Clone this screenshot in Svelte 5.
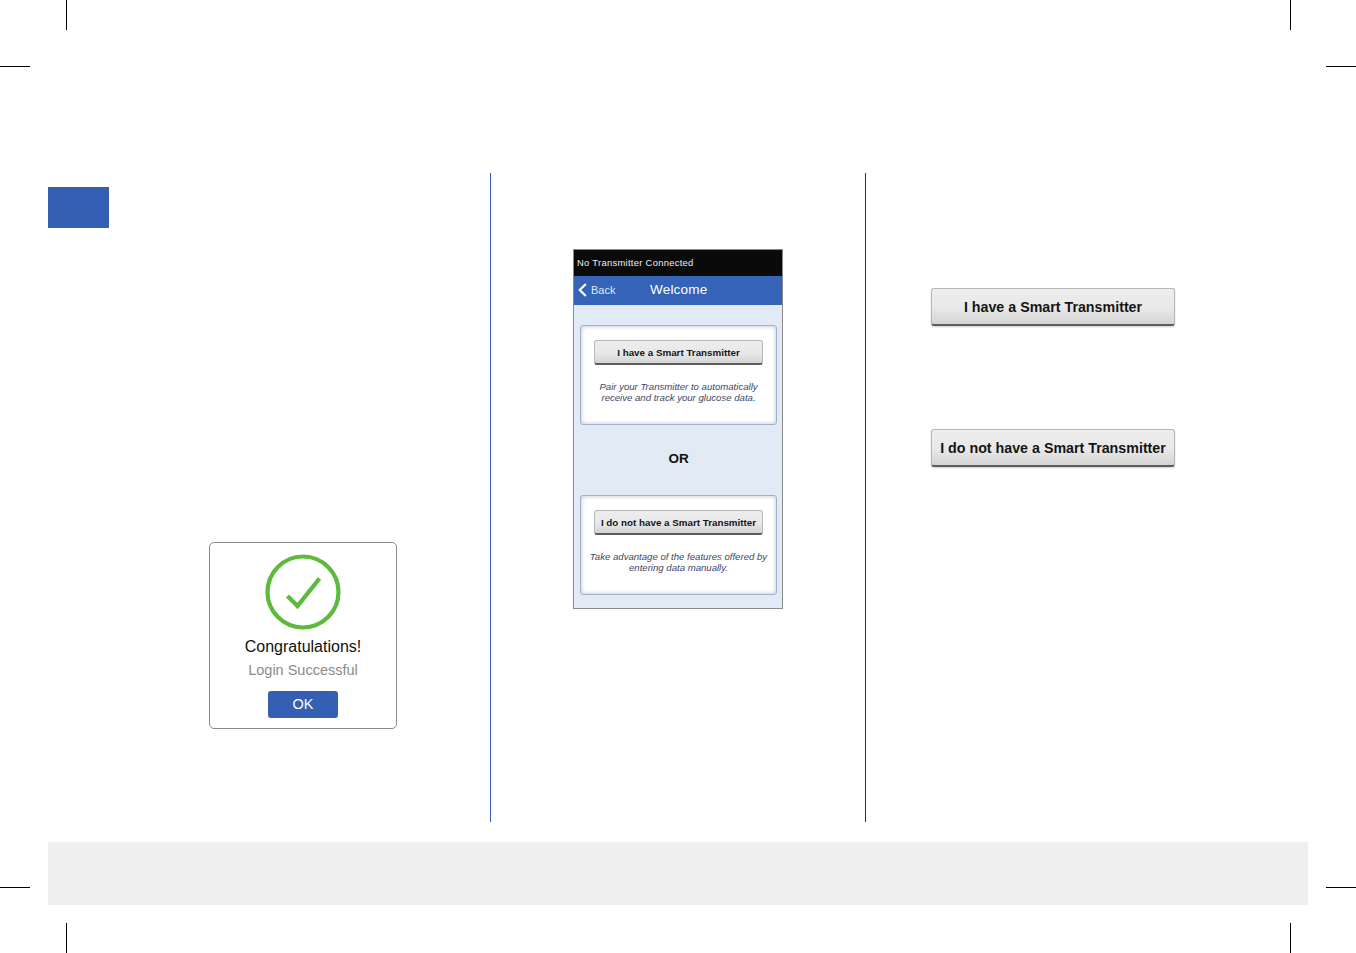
<script>
  // crop marks sit on the page corners, outside the content flow
  const marks = [
    ["v", 66, 0], ["v", 1290, 0], ["v", 66, 923], ["v", 1290, 923],
    ["h", 0, 66], ["h", 1326, 66], ["h", 0, 887], ["h", 1326, 887]
  ];
</script>

<div class="page">
  {#each marks as [dir, x, y]}
    <i class="mark {dir}" style="left:{x}px;top:{y}px"></i>
  {/each}

  <div class="columns">
    <section class="col first">
      <div class="tab"></div>
      <div class="dialog">
        <svg class="check" width="76" height="76" viewBox="0 0 76 76" fill="none" stroke="#5cbb3c">
          <circle cx="38" cy="38" r="35.5" stroke-width="4.2"/>
          <path d="M22.5 42 L32.5 52 L54.5 24.5" stroke-width="4.4"/>
        </svg>
        <div class="congrats">Congratulations!</div>
        <div class="login">Login Successful</div>
        <div class="ok">OK</div>
      </div>
    </section>

    <section class="col second">
      <div class="phone">
        <div class="status">No Transmitter Connected</div>
        <div class="nav">
          <span class="back">
            <svg width="9" height="14" viewBox="0 0 9 14" fill="none" stroke="#fff" stroke-width="2.2">
              <path d="M7.8 1 L1.8 7 L7.8 13"/>
            </svg>
            Back
          </span>
          <span class="title">Welcome</span>
        </div>
        <div class="body">
          <div class="card">
            <div class="btn small">I have a Smart Transmitter</div>
            <p>Pair your Transmitter to automatically<br />receive and track your glucose data.</p>
          </div>
          <div class="or">OR</div>
          <div class="card">
            <div class="btn small">I do not have a Smart Transmitter</div>
            <p>Take advantage of the features offered by<br />entering data manually.</p>
          </div>
        </div>
      </div>
    </section>

    <section class="col third">
      <div class="btn large">I have a Smart Transmitter</div>
      <div class="btn large">I do not have a Smart Transmitter</div>
    </section>
  </div>

  <div class="footer"></div>
</div>

<style>
  :global(body) {
    margin: 0;
    background: #fff;
    font-family: "Liberation Sans", Arial, sans-serif;
  }

  .page {
    position: relative;
    width: 1356px;
    height: 953px;
    box-sizing: border-box;
    padding: 173px 48px 0;
    overflow: hidden;
  }

  .mark {
    position: absolute;
    background: #000;
  }

  .mark.v {
    width: 1px;
    height: 30px;
  }

  .mark.h {
    width: 30px;
    height: 1px;
  }

  .columns {
    display: grid;
    grid-template-columns: 443px 375px 1fr;
    height: 649px;
  }

  .col {
    box-sizing: border-box;
  }

  .first {
    border-right: 1px solid #345fb2;
    padding-top: 14px;
  }

  .second {
    border-right: 1px solid #333;
    padding: 76px 0 0 82px;
  }

  .third {
    display: flex;
    flex-direction: column;
    gap: 103px;
    padding: 115px 0 0 65px;
  }

  .tab {
    width: 61px;
    height: 41px;
    background: #345fb2;
  }

  .dialog {
    box-sizing: border-box;
    width: 188px;
    height: 187px;
    margin: 314px 0 0 161px;
    padding-top: 11px;
    border: 1px solid #8a8a8a;
    border-radius: 5px;
    display: flex;
    flex-direction: column;
    align-items: center;
  }

  .check {
    display: block;
    flex-shrink: 0;
  }

  .congrats {
    margin-top: 7px;
    font-size: 16px;
    line-height: 20px;
    color: #111;
  }

  .login {
    margin-top: 3px;
    font-size: 14.5px;
    line-height: 20px;
    color: #8b8b8b;
  }

  .ok {
    width: 70px;
    height: 27px;
    margin-top: 11px;
    background: #345fb2;
    border-radius: 3px;
    color: #fff;
    font-size: 14.5px;
    line-height: 27px;
    text-align: center;
  }

  .phone {
    box-sizing: border-box;
    width: 210px;
    height: 360px;
    border: 1px solid #8a8a8a;
    background: #e1eaf5;
    display: flex;
    flex-direction: column;
  }

  .status {
    height: 26px;
    background: #0a0a0a;
    color: #f0f0f0;
    font-size: 9.4px;
    line-height: 26px;
    padding-left: 3px;
    letter-spacing: 0.3px;
    white-space: nowrap;
  }

  .nav {
    box-sizing: border-box;
    height: 29px;
    padding-bottom: 2px;
    background: #3563b8;
    color: #fff;
    display: flex;
    align-items: center;
    flex-shrink: 0;
  }

  .back {
    display: flex;
    align-items: center;
    gap: 4px;
    width: 76px;
    padding-left: 4px;
    box-sizing: border-box;
    font-size: 11px;
    color: #dfe7f5;
  }

  .title {
    font-size: 13.5px;
    letter-spacing: 0.2px;
  }

  .body {
    padding: 20px 5px 0 6px;
  }

  .card {
    box-sizing: border-box;
    height: 100px;
    background: #fff;
    border: 1px solid #9fb0c8;
    border-radius: 3px;
    box-shadow: inset 0 0 4px rgba(90, 110, 150, 0.45);
    padding-top: 14px;
    text-align: center;
  }

  .card p {
    margin: 16px 0 0;
    font-size: 9.6px;
    line-height: 11px;
    font-style: italic;
    color: #3c4668;
    white-space: nowrap;
  }

  .or {
    height: 70px;
    font-size: 13.5px;
    font-weight: bold;
    line-height: 68px;
    text-align: center;
    color: #111;
  }

  .btn {
    box-sizing: border-box;
    background: linear-gradient(#ededed 0%, #e8e8e8 55%, #d4d4d4 100%);
    border: 1px solid #b8b8b8;
    border-bottom: 2px solid #5c5c5c;
    border-radius: 3px;
    font-weight: bold;
    text-align: center;
    color: #151515;
    white-space: nowrap;
  }

  .btn.small {
    width: 169px;
    height: 25px;
    margin-left: 13px;
    font-size: 9.8px;
    line-height: 24px;
  }

  .btn.large {
    width: 244px;
    height: 38px;
    font-size: 14.25px;
    line-height: 37px;
    box-shadow: 0 1px 2px rgba(0, 0, 0, 0.2);
  }

  .footer {
    height: 63px;
    margin-top: 20px;
    background: #efefef;
  }
</style>
